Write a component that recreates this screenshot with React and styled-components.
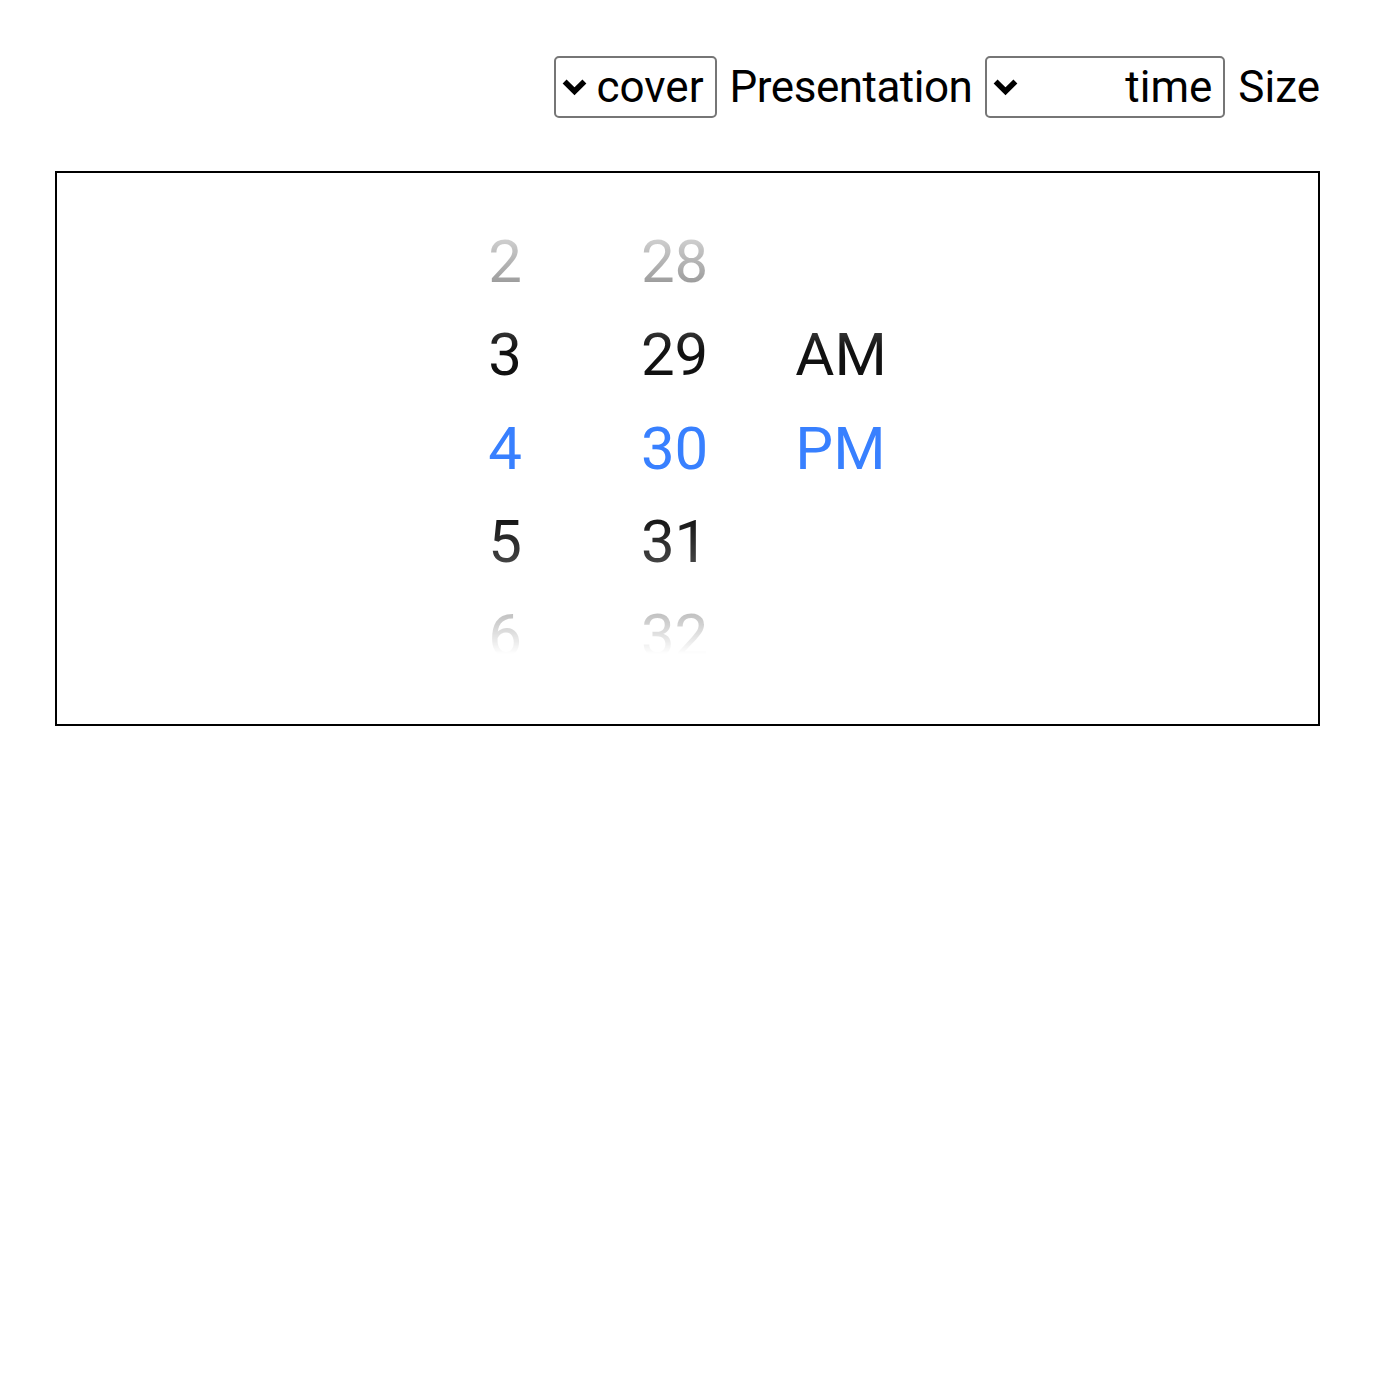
import React from "react";
import styled, { createGlobalStyle } from "styled-components";

const hours = ["2", "3", "4", "5", "6"];
const minutes = ["28", "29", "30", "31", "32"];
const periods = ["", "AM", "PM", "", ""];
const SELECTED = 2;

const App = () => {
  return (
    <Page>
      <GlobalStyle />
      <Toolbar>
        <Label>Size</Label>
        <Select $width={240}>
          <SelectText>time</SelectText>
          <Chevron />
        </Select>
        <Label $tight>Presentation</Label>
        <Select $width={163}>
          <SelectText>cover</SelectText>
          <Chevron />
        </Select>
      </Toolbar>

      <Frame>
        <Picker>
          <Column>
            {hours.map((h, i) => (
              <Item key={h} $active={i === SELECTED}>
                {h}
              </Item>
            ))}
          </Column>
          <Column $offset={119}>
            {minutes.map((m, i) => (
              <Item key={m} $active={i === SELECTED}>
                {m}
              </Item>
            ))}
          </Column>
          <Column $offset={87}>
            {periods.map((p, i) => (
              <Item key={i} $active={i === SELECTED}>
                {p}
              </Item>
            ))}
          </Column>
        </Picker>
      </Frame>
    </Page>
  );
};

const Chevron = () => (
  <svg width="25" height="17" viewBox="0 0 25 17">
    <path
      d="M4.6 4.4 L12.5 12.2 L20.4 4.4"
      fill="none"
      stroke="#000"
      strokeWidth="5.6"
      strokeLinecap="square"
    />
  </svg>
);

export default App;

const GlobalStyle = createGlobalStyle`
  body {
    margin: 0;
    background: #fff;
    font-family: Roboto, "Noto Sans", sans-serif;
  }
`;

const Page = styled.div`
  padding: 56px 55px 0 55px;
`;

const Toolbar = styled.div`
  direction: rtl;
  display: flex;
  align-items: center;
  gap: 13px;
  height: 62px;
`;

const Label = styled.span`
  font-size: 44px;
  color: #000;
  line-height: 62px;
  letter-spacing: ${(p) => (p.$tight ? "-0.5px" : "0")};
`;

const Select = styled.div`
  box-sizing: border-box;
  width: ${(p) => p.$width}px;
  height: 62px;
  border: 2px solid #767676;
  border-radius: 5px;
  display: flex;
  align-items: center;
  justify-content: space-between;
  padding: 0 11px 0 6px;
`;

const SelectText = styled.span`
  font-size: 44px;
  color: #000;
  line-height: 58px;
`;

const Frame = styled.div`
  box-sizing: border-box;
  margin-top: 53px;
  height: 555px;
  border: 2px solid #000;
  display: flex;
  justify-content: center;
  align-items: center;
`;

const Picker = styled.div`
  direction: ltr;
  display: flex;
  -webkit-mask-image: linear-gradient(
    to bottom,
    rgba(0, 0, 0, 0) 0%,
    rgba(0, 0, 0, 0.2) 5%,
    rgba(0, 0, 0, 0.4) 14%,
    rgba(0, 0, 0, 0.85) 25%,
    rgba(0, 0, 0, 1) 29%,
    rgba(0, 0, 0, 1) 64%,
    rgba(0, 0, 0, 0.8) 74%,
    rgba(0, 0, 0, 0.3) 84%,
    rgba(0, 0, 0, 0) 94%
  );
  mask-image: linear-gradient(
    to bottom,
    rgba(0, 0, 0, 0) 0%,
    rgba(0, 0, 0, 0.2) 5%,
    rgba(0, 0, 0, 0.4) 14%,
    rgba(0, 0, 0, 0.85) 25%,
    rgba(0, 0, 0, 1) 29%,
    rgba(0, 0, 0, 1) 64%,
    rgba(0, 0, 0, 0.8) 74%,
    rgba(0, 0, 0, 0.3) 84%,
    rgba(0, 0, 0, 0) 94%
  );
`;

const Column = styled.div`
  display: flex;
  flex-direction: column;
  margin-left: ${(p) => p.$offset || 0}px;
`;

const Item = styled.div`
  height: 93.5px;
  line-height: 93.5px;
  font-size: 60px;
  color: ${(p) => (p.$active ? "#3880ff" : "#111")};
  white-space: nowrap;
`;
